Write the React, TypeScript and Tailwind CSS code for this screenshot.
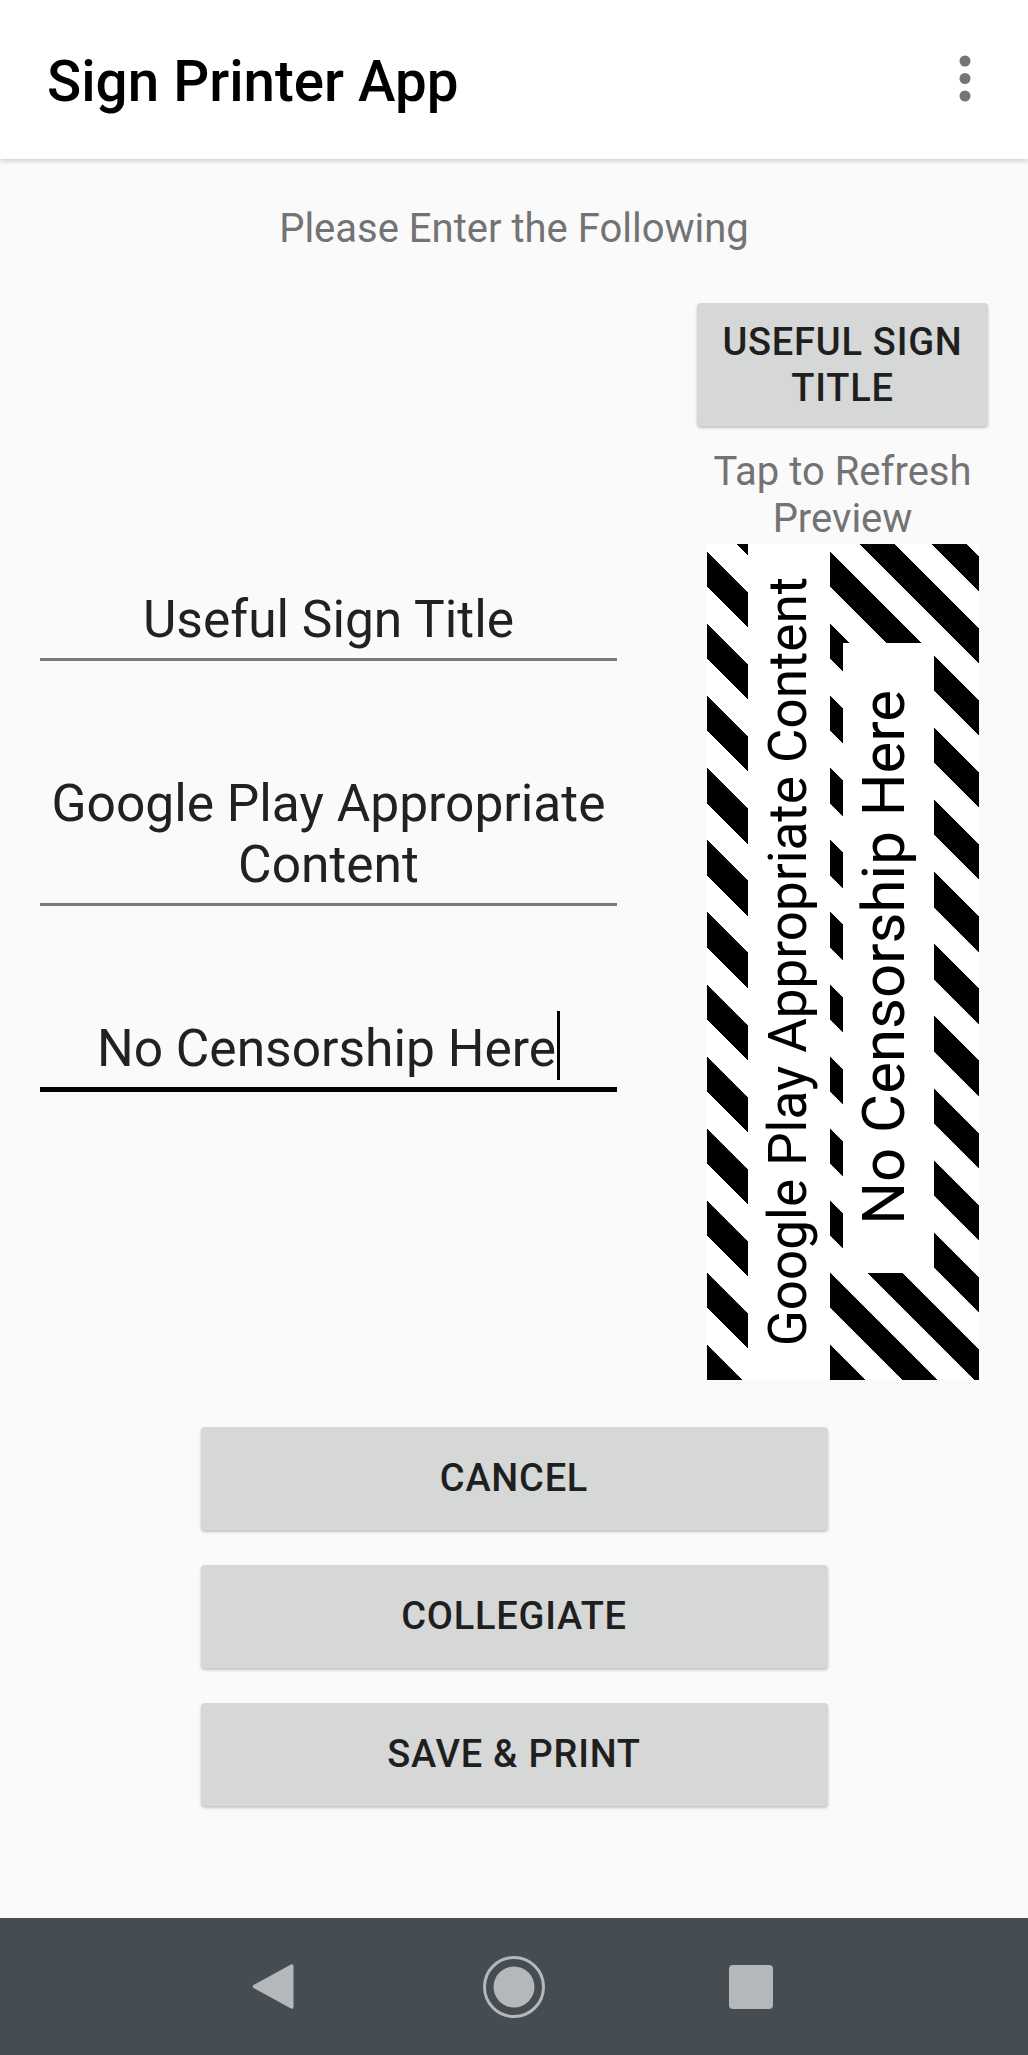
import React from "react";

const stripes =
    "bg-[image:repeating-linear-gradient(45deg,#000_0px,#000_25px,#fff_25px,#fff_51px)]";

function OverflowIcon() {
    return (
        <svg width="14" height="50" viewBox="0 0 14 50" fill="#757575">
            <circle cx="7" cy="7" r="5.5" />
            <circle cx="7" cy="24.5" r="5.5" />
            <circle cx="7" cy="42" r="5.5" />
        </svg>
    );
}

function Field({ lines, focused }: { lines: string[]; focused?: boolean }) {
    return (
        <div
            className={`w-full pb-[7px] text-center text-[51.5px] leading-[1.182] text-[#212121] ${
                focused ? "border-b-[5px] border-black" : "border-b-[3px] border-[#7a7a7a]"
            }`}
        >
            {lines.map((l, i) => (
                <div key={i}>
                    {l}
                    {focused && i === lines.length - 1 && (
                        <span className="inline-block w-[3px] h-[69px] -mt-[10px] ml-[1px] bg-black align-[-14px]" />
                    )}
                </div>
            ))}
        </div>
    );
}

function GreyButton({ label, className }: { label: string; className: string }) {
    return (
        <button
            className={`flex items-center justify-center rounded-[4px] bg-[#d6d7d7] text-[38px] font-medium tracking-[0.02em] text-[#1f1f1f] shadow-[0_2px_3px_rgba(0,0,0,0.22)] ${className}`}
        >
            {label}
        </button>
    );
}

function SignPreview() {
    return (
        <div className="flex w-[272px] h-[836px] bg-white">
            <div className={`w-[41px] h-full ${stripes}`} />
            <div className="w-[82px] h-full flex items-center justify-center bg-white">
                <span className="[writing-mode:vertical-rl] rotate-180 text-[53px] leading-[1.172] text-black whitespace-nowrap">
                    Google Play Appropriate Content
                </span>
            </div>
            <div className={`flex-1 h-full pt-[99px] pl-[13px] ${stripes}`}>
                <div className="w-[91px] h-[630px] bg-white flex items-center justify-center pl-[2px] pr-[10px]">
                    <span className="[writing-mode:vertical-rl] rotate-180 text-[60px] leading-[1.172] text-black whitespace-nowrap">
                        No Censorship Here
                    </span>
                </div>
            </div>
        </div>
    );
}

function NavBar() {
    return (
        <div className="mt-auto h-[137px] bg-[#454c52] flex items-center">
            <div className="w-[252px]" />
            <svg width="42" height="47" viewBox="0 0 42 47" fill="#b4b8ba">
                <path d="M39 1.5 C40.5 0.8 41.5 1.8 41.5 3 L41.5 44 C41.5 45.2 40.5 46.2 39 45.5 L1.5 25 C0.3 24.2 0.3 22.8 1.5 22 Z" />
            </svg>
            <div className="w-[188px]" />
            <svg width="64" height="64" viewBox="0 0 64 64" fill="none">
                <circle cx="32" cy="32" r="29.5" stroke="#b4b8ba" strokeWidth="3" />
                <circle cx="32" cy="32" r="20.5" fill="#b4b8ba" />
            </svg>
            <div className="w-[183px]" />
            <div className="w-[44px] h-[44px] rounded-[4px] bg-[#b4b8ba]" />
        </div>
    );
}

export default function App() {
    return (
        <div className="flex flex-col w-full h-[2055px] bg-[#fafafa] font-['Roboto',_'Noto_Sans',_sans-serif]">
            <header className="relative z-10 flex items-center justify-between h-[159px] shrink-0 bg-white pl-[47px] pr-[56px] shadow-[0_2px_5px_rgba(0,0,0,0.18)]">
                <h1 className="mt-[6px] text-[56.5px] font-medium leading-none text-black">Sign Printer App</h1>
                <div className="mt-[-2px]">
                    <OverflowIcon />
                </div>
            </header>

            <p className="mt-[47px] text-center text-[40px] leading-[1.172] text-[#737373]">
                Please Enter the Following
            </p>

            <div className="mt-[50px] flex items-center pl-[40px]">
                <div className="w-[577px] flex flex-col gap-[113px]">
                    <Field lines={["Useful Sign Title"]} />
                    <Field lines={["Google Play Appropriate", "Content"]} />
                    <Field lines={["No Censorship Here"]} focused />
                </div>

                <div className="ml-[80px] w-[291px] flex flex-col items-center">
                    <GreyButton
                        label="USEFUL SIGN TITLE"
                        className="w-[291px] h-[123px] px-[20px] pt-[2px] text-center leading-[46px]"
                    />
                    <p className="mt-[23px] px-[10px] text-center text-[40px] leading-[1.172] text-[#737373]">
                        Tap to Refresh Preview
                    </p>
                    <div className="mt-[1px]">
                        <SignPreview />
                    </div>
                </div>
            </div>

            <div className="mt-[47px] flex flex-col items-center gap-[35px]">
                <GreyButton label="CANCEL" className="w-[627px] h-[103px] leading-[1.172]" />
                <GreyButton label="COLLEGIATE" className="w-[627px] h-[103px] leading-[1.172]" />
                <GreyButton label="SAVE & PRINT" className="w-[627px] h-[103px] leading-[1.172]" />
            </div>

            <NavBar />
        </div>
    );
}
